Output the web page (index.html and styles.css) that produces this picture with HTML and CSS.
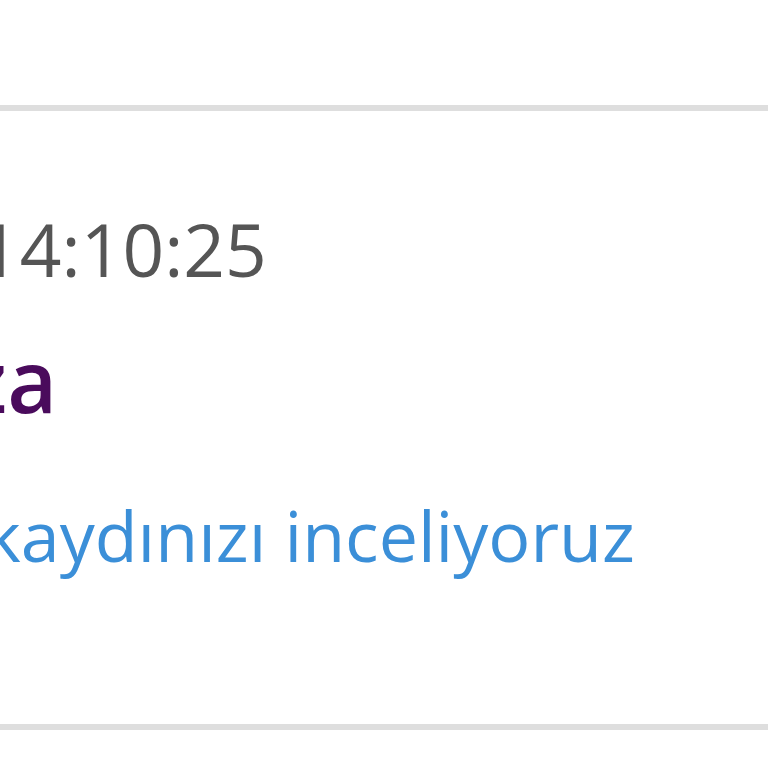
FILE: index.html
```html
<!DOCTYPE html>
<html lang="tr">
<head>
    <meta charset="UTF-8">
    <meta name="viewport" content="width=device-width, initial-scale=1.0">
    <title>Başvuru durumu</title>
    <link rel="stylesheet" href="styles.css">
</head>
<body>
    <div class="ust"></div>
    <div class="kart">
        <p class="tarih">14:10:25</p>
        <p class="isim">za</p>
        <p class="durum">kaydınızı inceliyoruz</p>
    </div>
</body>
</html>
```

FILE: styles.css
```css
body{
    margin: 0;
    background-color: #fff;
    font-family: "Open Sans", "Noto Sans", sans-serif;
    overflow: hidden;
}

.ust{
    height: 105px;
}

.kart{
    border-top: 6px solid #dedede;
    border-bottom: 6px solid #dedede;
    padding: 101px 0 154px 0;
    white-space: nowrap;
}

.kart p{
    margin: 0;
    line-height: 1;
}

.tarih{
    color: #555;
    font-size: 73px;
    margin-left: -22px !important;
}

.isim{
    color: #4a0b5c;
    font-size: 86px;
    font-weight: 600;
    margin-top: 52px !important;
    margin-left: -34px !important;
}

.durum{
    color: #3b8fd8;
    font-size: 70px;
    margin-top: 77px !important;
    margin-left: -16px !important;
}
```
